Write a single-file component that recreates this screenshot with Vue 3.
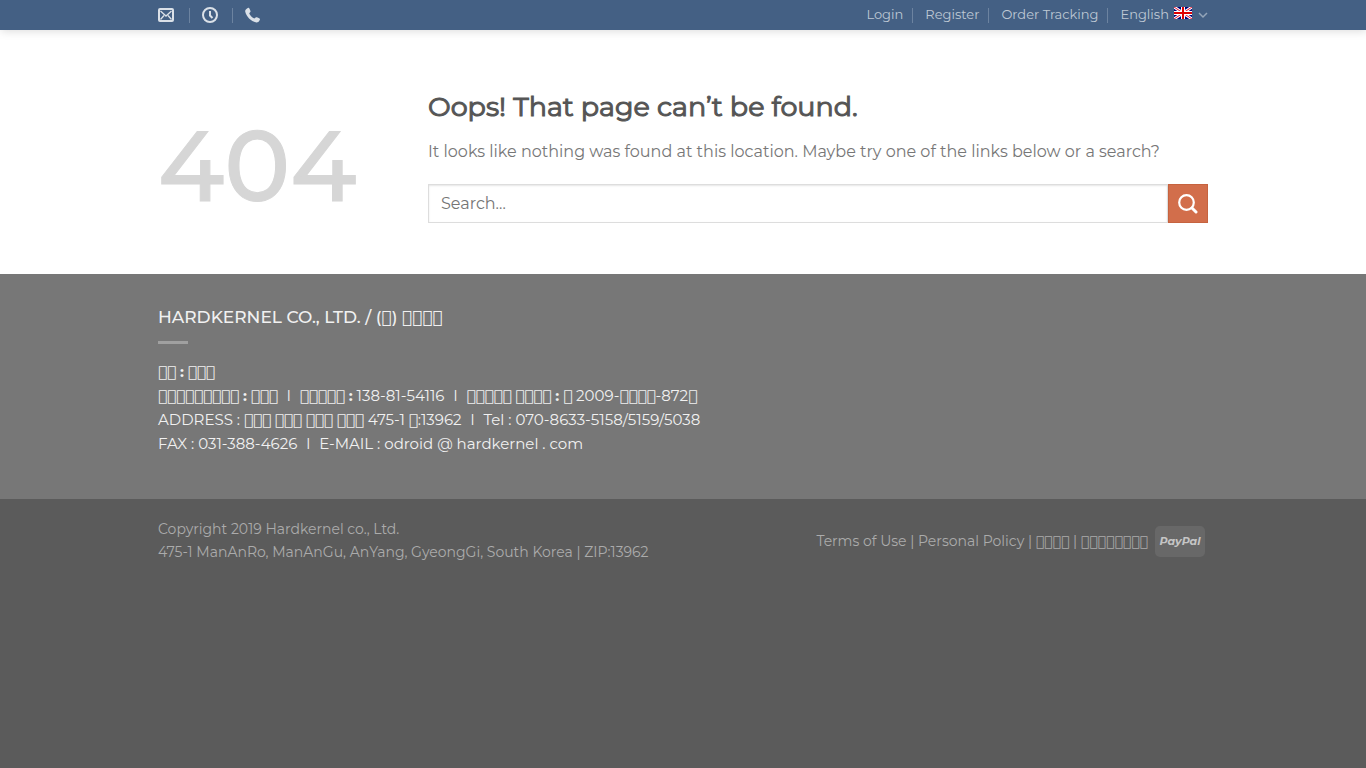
<script setup>
import { ref } from 'vue'

const query = ref('')
const language = ref('English')
const accountLinks = ['Login', 'Register', 'Order Tracking']

// run of empty glyph boxes
const boxes = (count) => String.fromCodePoint(0x100000).repeat(count)
</script>

<template>
  <div class="page">
    <header class="topBar">
      <div class="container topInner">
        <nav class="topNav contactNav" aria-label="Contact">
          <a href="#" aria-label="Email">
            <svg width="16" height="16" viewBox="0 0 16 16" fill="none" stroke="currentColor">
              <rect x="1" y="2" width="14" height="12" rx="1" stroke-width="2" />
              <path d="M2.5 4 L8 9 L13.500 4 M2.500 12.500 L6 8.500 M13.500 12.500 L10 8.500" stroke-width="1.300" />
            </svg>
          </a>
          <a href="#" aria-label="Opening hours">
            <svg width="16" height="16" viewBox="0 0 16 16" fill="none" stroke="currentColor" stroke-width="2">
              <circle cx="8" cy="8" r="7" />
              <path d="M8 4 V8.500 L10.500 11" />
            </svg>
          </a>
          <a href="#" aria-label="Phone">
            <svg width="16" height="16" viewBox="0 0 16 16" fill="currentColor">
              <path d="M2.800 0.900 C3.500 0.500 4.100 0.800 4.400 1.500 L5.400 3.800 C5.700 4.500 5.500 5 4.900 5.500 C4.300 6.100 4.200 6.400 4.500 7 C5.500 8.800 7 10.300 8.800 11.300 C9.400 11.600 9.700 11.500 10.200 10.800 C10.700 10.200 11.200 10 11.900 10.300 L14.200 11.300 C14.900 11.600 15.200 12.200 14.800 12.900 C13.900 14.700 12.700 15.600 11.100 15.400 C6.200 14.600 1 9.500 0.200 4.600 C0 3 1 1.800 2.800 0.900 Z" />
            </svg>
          </a>
        </nav>
        <nav class="topNav accountNav" aria-label="Account">
          <a v-for="link in accountLinks" :key="link" href="#"><span>{{ link }}</span></a>
          <a href="#">
            <span>{{ language }}</span>
            <svg class="flag" width="18" height="12" viewBox="0 0 18 12">
              <rect width="18" height="12" fill="#00007c" />
              <path d="M0 0 L18 12 M18 0 L0 12" stroke="#fff" stroke-width="3" />
              <path d="M0 0 L18 12 M18 0 L0 12" stroke="#e8112d" stroke-width="1" />
              <path d="M9 0 V12 M0 6 H18" stroke="#fff" stroke-width="4" />
              <path d="M9 0 V12 M0 6 H18" stroke="#e00000" stroke-width="2" />
            </svg>
            <svg class="chevron" width="10" height="10" viewBox="0 0 10 10" fill="none" stroke="currentColor" stroke-width="1.500">
              <path d="M1 3 L5 7 L9 3" />
            </svg>
          </a>
        </nav>
      </div>
    </header>

    <main class="notFound">
      <div class="container columns">
        <div class="code">404</div>
        <section class="message">
          <h1>Oops! That page can’t be found.</h1>
          <p>It looks like nothing was found at this location. Maybe try one of the links below or a search?</p>
          <form class="searchForm" @submit.prevent>
            <input v-model="query" type="search" placeholder="Search…" aria-label="Search">
            <button type="submit" aria-label="Submit search">
              <svg width="20" height="20" viewBox="0 0 20 20" fill="none" stroke="currentColor">
                <circle cx="8.500" cy="8.500" r="7.300" stroke-width="2.200" />
                <path d="M14 14 L18 18" stroke-width="3" stroke-linecap="round" />
              </svg>
            </button>
          </form>
        </section>
      </div>
    </main>

    <footer>
      <div class="company">
        <div class="container">
          <h2>HARDKERNEL CO., LTD. / (<span class="box">{{ boxes(1) }}</span>) <span class="box">{{ boxes(4) }}</span></h2>
          <div class="divider"></div>
          <p>
            <span class="box">{{ boxes(2) }}</span> <b>:</b> <span class="box">{{ boxes(3) }}</span><br>
            <span class="box">{{ boxes(9) }}</span> <b>:</b> <span class="box">{{ boxes(3) }}</span> <span class="bar">l</span> <span class="box">{{ boxes(5) }}</span> <b>:</b> 138-81-54116 <span class="bar">l</span> <span class="box">{{ boxes(5) }}</span> <span class="box">{{ boxes(4) }}</span> <b>:</b> <span class="box">{{ boxes(1) }}</span> 2009-<span class="box">{{ boxes(4) }}</span>-872<span class="box">{{ boxes(1) }}</span><br>
            ADDRESS : <span class="box">{{ boxes(3) }}</span> <span class="box">{{ boxes(3) }}</span> <span class="box">{{ boxes(3) }}</span> <span class="box">{{ boxes(3) }}</span> 475-1 <span class="box">{{ boxes(1) }}</span>:13962 <span class="bar">l</span> Tel : 070-8633-5158/5159/5038<br>
            FAX : 031-388-4626 <span class="bar">l</span> E-MAIL : odroid @ hardkernel . com
          </p>
        </div>
      </div>
      <div class="container legal">
        <div class="copyright">
          Copyright 2019 Hardkernel co., Ltd.<br>
          475-1 ManAnRo, ManAnGu, AnYang, GyeongGi, South Korea | ZIP:13962
        </div>
        <div class="policies">
          <div>
            <a href="#">Terms of Use</a> | <a href="#">Personal Policy</a> | <a href="#" class="box">{{ boxes(4) }}</a> | <a href="#" class="box">{{ boxes(8) }}</a>
          </div>
          <span class="paypal">PayPal</span>
        </div>
      </div>
    </footer>
  </div>
</template>

<style>
body {
  margin: 0;
  background-color: #5b5b5b;
}
</style>

<style scoped>
.page {
  font-family: Montserrat, Inter, "Liberation Sans", sans-serif;
  font-size: 16px;
  color: #777;
}
.container {
  box-sizing: border-box;
  width: 100%;
  max-width: 1080px;
  margin: 0 auto;
  padding: 0 15px;
}
a {
  color: inherit;
  text-decoration: none;
}
.box {
  font-family: "DejaVu Sans", sans-serif;
  font-weight: 400;
  line-height: 1;
}

/* top bar */
.topBar {
  position: relative;
  background-color: #446084;
  box-shadow: 1px 1px 10px rgba(0, 0, 0, 0.15);
}
.topInner {
  display: flex;
  justify-content: space-between;
  align-items: center;
  height: 30px;
}
.topNav {
  display: flex;
  align-items: center;
  font-size: 13px;
  line-height: 16px;
  color: #bec8d4;
}
.topNav a {
  display: flex;
  align-items: center;
}
.topNav a + a::before {
  content: "";
  width: 1px;
  height: 15px;
  background-color: #6c83a0;
}
.contactNav {
  color: #dbe1e8;
}
.contactNav a + a::before {
  margin: 0 12px 0 15px;
}
.contactNav a:last-child::before {
  margin-left: 14px;
}
.accountNav a + a::before {
  margin: 0 12px 0 9px;
}
.accountNav span {
  padding-bottom: 2px;
}
.flag {
  margin: 0 6px 4px 5px;
}
.chevron {
  color: #94a5b9;
}

/* 404 block */
.notFound {
  padding: 55px 0 51px;
  background-color: #fff;
}
.columns {
  display: flex;
}
.code {
  flex: 0 0 270px;
  padding-top: 24px;
  font-size: 99px;
  line-height: 114px;
  font-weight: 500;
  color: #d6d6d6;
  -webkit-text-stroke: 1px #d6d6d6;
}
.message {
  flex: 1;
}
h1 {
  margin: 0 0 10px;
  font-size: 27px;
  line-height: 44px;
  font-weight: 400;
  color: #555;
  -webkit-text-stroke: 1px #555;
}
.message p {
  margin: 0 0 20px;
  font-size: 16px;
  line-height: 25px;
}
.searchForm {
  display: flex;
}
.searchForm input {
  flex: 1;
  min-width: 0;
  box-sizing: border-box;
  height: 39px;
  padding: 0 12px;
  border: 1px solid #ddd;
  border-radius: 0;
  outline: none;
  background-color: #fff;
  box-shadow: inset 0 1px 2px rgba(0, 0, 0, 0.1);
  font-family: inherit;
  font-size: 16px;
  color: #333;
}
.searchForm input::placeholder {
  color: #757575;
}
.searchForm button {
  display: flex;
  align-items: center;
  justify-content: center;
  width: 40px;
  height: 39px;
  padding: 0;
  border: 1px solid #c6633f;
  background-color: #d26e4b;
  color: #fff;
  cursor: pointer;
}

/* footer */
.company {
  padding: 30px 0 43px;
  background-color: #777;
  color: #f1f1f1;
}
h2 {
  margin: 0;
  font-size: 17px;
  line-height: 26px;
  font-weight: 500;
}
.divider {
  width: 30px;
  height: 3px;
  margin: 11px 0 16px;
  background-color: #a0a0a0;
}
.company p {
  margin: 0;
  font-size: 15px;
  line-height: 24px;
}
.bar {
  margin: 0 5px;
}
.legal {
  display: flex;
  justify-content: space-between;
  padding-top: 19px;
  padding-bottom: 15px;
  font-size: 14px;
  line-height: 23px;
  color: #ababab;
}
.policies {
  display: flex;
  align-items: center;
  padding-right: 3px;
}
.paypal {
  box-sizing: border-box;
  width: 50px;
  margin-left: 7px;
  padding: 4px 0;
  border-radius: 5px;
  background-color: #686868;
  color: #c5c5c5;
  font-size: 11px;
  font-weight: 700;
  font-style: italic;
  text-align: center;
}
@media (max-width: 849px) {
  .columns, .legal {
    flex-direction: column;
  }
  .code {
    flex-basis: auto;
    padding-top: 0;
  }
}
</style>
